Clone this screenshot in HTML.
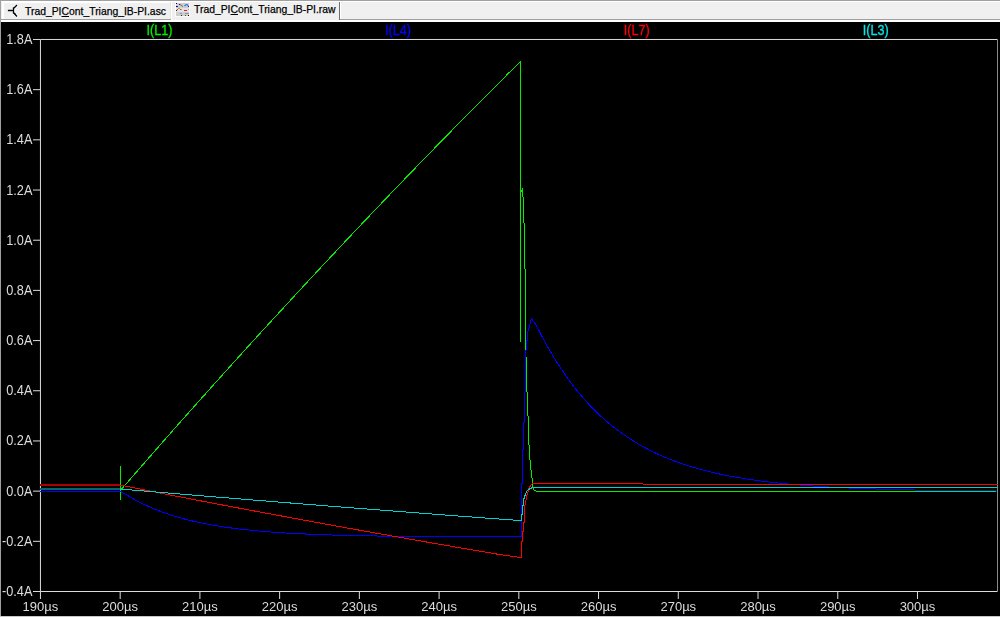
<!DOCTYPE html>
<html><head><meta charset="utf-8"><style>
html,body{margin:0;padding:0;}
body{width:1000px;height:617px;position:relative;overflow:hidden;background:#f0f0f0;font-family:"Liberation Sans",sans-serif;}
.bar{position:absolute;left:0;top:0;width:1000px;height:22px;background:#f0f0f0;}
.tab{position:absolute;font-size:11px;color:#000;white-space:nowrap;transform:scaleX(0.9425);transform-origin:0 0;-webkit-text-stroke:0.25px #000;}
</style></head><body>
<div class="bar">
 <svg width="1000" height="22" style="position:absolute;left:0;top:0">
  <rect x="0" y="0" width="1000" height="22" fill="#f0f0f0"/>
  <rect x="0" y="0" width="1000" height="1" fill="#a0a0a0"/>
  <rect x="0" y="1" width="1000" height="1" fill="#ffffff"/>
  <rect x="0" y="19" width="1000" height="1" fill="#a0a0a0"/>
  <rect x="0" y="20" width="1000" height="2" fill="#ffffff"/>
  <rect x="2" y="2" width="2" height="17" fill="#ffffff"/>
  <rect x="2" y="2" width="168" height="1" fill="#ffffff"/>
  <rect x="170" y="2" width="1" height="17" fill="#e6e6e6"/>
  <rect x="171" y="1" width="168" height="21" fill="#f0f0f0"/>
  <rect x="171" y="1" width="1" height="19" fill="#ffffff"/>
  <rect x="171" y="1" width="168" height="1" fill="#ffffff"/>
  <rect x="339" y="2" width="1" height="18" fill="#6e6e6e"/><rect x="340" y="2" width="1" height="17" fill="#ffffff"/>
  <rect x="171" y="20" width="169" height="2" fill="#ffffff"/>
  <g stroke="#fff" stroke-width="2.6" fill="none" stroke-linecap="round" opacity="0.8">
   <path d="M8.5 10.5H12.5M13.5 8V13M13.5 8.5L16.5 5.5M13.5 12.5L16.5 16"/>
  </g>
  <g stroke="#000" stroke-width="1.3" fill="none" stroke-linecap="square">
   <path d="M8.5 10.5H12.5M13.5 8V13M13.5 8.5L16.5 5.5M13.5 12.5L16.5 16"/>
  </g>
  <path d="M14.2 13.2L16 15.6L15.6 13.6Z" fill="#000"/>
  <g>
   <rect x="175" y="2" width="15" height="15" fill="#fafafa"/>
   <rect x="176" y="3" width="13" height="13" fill="#cdcdcd"/>
   <rect x="176" y="8" width="13" height="4" fill="#d6e6ea"/>
   <rect x="176" y="3" width="1" height="1" fill="#111"/>
   <rect x="176" y="6" width="1" height="1" fill="#111"/>
   <rect x="176" y="10" width="1" height="1" fill="#222"/>
   <rect x="177" y="6" width="1" height="1" fill="#1010ff"/>
   <rect x="179" y="4" width="1" height="1" fill="#1010ff"/>
   <path d="M180 4.5L183 6.5" stroke="#707070" stroke-width="1" fill="none"/>
   <path d="M184.5 6L186 4.5L187.3 4.7L188.5 6.5" stroke="#3a78d8" stroke-width="1.1" fill="none"/>
   <rect x="188" y="6" width="1" height="1" fill="#1010ff"/>
   <rect x="177" y="9" width="1" height="1" fill="#ff2a10"/>
   <rect x="178" y="8" width="2" height="1" fill="#e89030"/>
   <rect x="180" y="9" width="1" height="1" fill="#ff2a10"/>
   <rect x="181" y="9" width="1" height="1" fill="#e89030"/>
   <rect x="184" y="10" width="3" height="1" fill="#ff1010"/>
   <rect x="188" y="9" width="1" height="1" fill="#e89030"/>
   <rect x="180" y="13" width="2" height="1" fill="#8a98b0"/>
   <rect x="185" y="13" width="4" height="1" fill="#8a98b0"/>
   <rect x="181" y="15" width="1" height="1" fill="#222"/>
   <rect x="185" y="15" width="1" height="1" fill="#555"/>
   <rect x="188" y="15" width="1" height="1" fill="#111"/>
  </g>
 </svg>
 <div class="tab" style="left:25px;top:5px">Trad_PI<u>C</u>ont_Triang_IB-PI.asc</div>
 <div class="tab" style="left:194px;top:2.5px">Trad_PI<u>C</u>ont_Triang_IB-PI.raw</div>
</div>
<svg width="1000" height="595" viewBox="0 22 1000 595" style="position:absolute;left:0;top:22px;will-change:transform">
<rect x="0" y="22" width="1000" height="595" fill="#000"/>
<g stroke="#dcdcdc" stroke-width="1" fill="none">
<path d="M40.45 39.47H997.5M40.45 591.5H997.5M40.45 39.47V591.5"/>
<path d="M33 39.47H40.45"/>
<path d="M33 89.66H40.45"/>
<path d="M33 139.84H40.45"/>
<path d="M33 190.03H40.45"/>
<path d="M33 240.21H40.45"/>
<path d="M33 290.39H40.45"/>
<path d="M33 340.58H40.45"/>
<path d="M33 390.76H40.45"/>
<path d="M33 440.95H40.45"/>
<path d="M33 491.13H40.45"/>
<path d="M33 541.32H40.45"/>
<path d="M33 591.51H40.45"/>
<path d="M40.45 591.5V599"/>
<path d="M120.18 591.5V599"/>
<path d="M199.91 591.5V599"/>
<path d="M279.64 591.5V599"/>
<path d="M359.37 591.5V599"/>
<path d="M439.10 591.5V599"/>
<path d="M518.83 591.5V599"/>
<path d="M598.56 591.5V599"/>
<path d="M678.29 591.5V599"/>
<path d="M758.02 591.5V599"/>
<path d="M837.75 591.5V599"/>
<path d="M917.48 591.5V599"/>
</g>
<path d="M997.5 39.47V591.5" stroke="#8a8a8a" stroke-width="1"/>
<g shape-rendering="crispEdges"><rect x="40.45" y="484" width="80.2" height="2" fill="#aa0000"/><rect x="40.45" y="488" width="80.2" height="2" fill="#006868"/></g>
<g fill="none" stroke-width="1" stroke-linejoin="round" shape-rendering="crispEdges">
<polyline stroke="#00f000" points="40.45,491.50 120.50,491.50"/>
<polyline stroke="#00f000" points="120.60,466.30 120.60,500.00"/>
<polyline stroke="#00f000" points="121.00,489.80 127.77,481.98 134.54,474.20 141.30,466.44 148.07,458.69 154.84,450.97 161.61,443.27 168.37,435.58 175.14,427.92 181.91,420.27 188.68,412.65 195.45,405.04 202.21,397.45 208.98,389.88 215.75,382.33 222.52,374.80 229.28,367.29 236.05,359.79 242.82,352.32 249.59,344.86 256.36,337.42 263.12,330.00 269.89,322.60 276.66,315.22 283.43,307.86 290.19,300.52 296.96,293.19 303.73,285.88 310.50,278.59 317.27,271.32 324.03,264.07 330.80,256.83 337.57,249.62 344.34,242.42 351.11,235.24 357.87,228.07 364.64,220.93 371.41,213.80 378.18,206.69 384.94,199.60 391.71,192.53 398.48,185.48 405.25,178.44 412.02,171.42 418.78,164.42 425.55,157.43 432.32,150.46 439.09,143.51 445.85,136.58 452.62,129.67 459.39,122.77 466.16,115.89 472.93,109.02 479.69,102.18 486.46,95.35 493.23,88.54 500.00,81.74 506.76,74.97 513.53,68.21 520.50,61.80 520.50,341.50 520.50,193.00 522.50,188.60 522.50,197.00 523.50,197.00 523.50,223.00 524.50,223.00 524.50,269.00 525.00,269.00 525.00,323.50 525.50,323.50 525.50,357.50 526.50,357.50 526.50,392.00 527.50,392.00 527.50,416.00 528.00,416.00 528.00,430.00 528.50,430.00 528.50,445.00 529.50,445.00 529.50,460.00 530.50,460.00 530.50,470.00 531.50,470.00 531.50,478.00 532.50,478.00 532.50,485.00 534.00,490.00 537.00,491.50 540.00,491.50 997.50,491.50"/>
<polyline stroke="#0000ff" points="40.45,491.50 120.50,491.50 125.56,494.29 130.63,497.35 135.69,500.19 140.76,502.82 145.82,505.27 150.89,507.54 155.95,509.65 161.02,511.61 166.08,513.43 171.15,515.12 176.21,516.69 181.27,518.15 186.34,519.50 191.40,520.76 196.47,521.93 201.53,523.01 206.60,524.01 211.66,524.95 216.73,525.82 221.79,526.62 226.86,527.37 231.92,528.06 236.98,528.71 242.05,529.31 247.11,529.86 252.18,530.38 257.24,530.86 262.31,531.30 267.37,531.72 272.44,532.10 277.50,532.46 282.57,532.79 287.63,533.10 292.69,533.38 297.76,533.65 302.82,533.89 307.89,534.12 312.95,534.33 318.02,534.53 323.08,534.71 328.15,534.88 333.21,535.04 338.28,535.19 343.34,535.32 348.41,535.45 353.47,535.57 358.53,535.67 363.60,535.78 368.66,535.87 373.73,535.96 378.79,536.04 383.86,536.11 388.92,536.18 393.99,536.25 399.05,536.31 404.12,536.36 409.18,536.42 414.24,536.46 419.31,536.51 424.37,536.55 429.44,536.59 434.50,536.62 439.57,536.66 444.63,536.69 449.70,536.72 454.76,536.74 459.83,536.77 464.89,536.79 469.95,536.81 475.02,536.83 480.08,536.85 485.15,536.87 490.21,536.88 495.28,536.90 500.34,536.91 505.41,536.92 510.47,536.94 515.54,536.95 520.50,536.50 521.50,536.50 521.50,483.00 522.50,483.00 522.50,449.00 523.50,449.00 523.50,422.00 524.50,422.00 524.50,392.00 525.00,392.00 525.00,366.00 525.50,366.00 525.50,350.00 526.50,350.00 526.50,340.00 527.50,340.00 527.50,333.00 531.50,318.60 534.00,322.00 537.00,326.62 540.87,334.27 544.74,341.56 548.61,348.52 552.48,355.15 556.35,361.47 560.22,367.50 564.09,373.25 567.96,378.74 571.83,383.97 575.70,388.96 579.57,393.72 583.44,398.25 587.31,402.58 591.18,406.71 595.05,410.64 598.92,414.39 602.79,417.97 606.66,421.38 610.53,424.64 614.39,427.74 618.26,430.70 622.13,433.53 626.00,436.22 629.87,438.78 633.74,441.23 637.61,443.57 641.48,445.79 645.35,447.92 649.22,449.94 653.09,451.87 656.96,453.71 660.83,455.47 664.70,457.14 668.57,458.74 672.44,460.26 676.31,461.72 680.18,463.10 684.05,464.42 687.92,465.68 691.79,466.88 695.66,468.03 699.53,469.12 703.40,470.16 707.27,471.16 711.14,472.10 715.01,473.01 718.88,473.87 722.75,474.69 726.62,475.48 730.49,476.22 734.36,476.94 738.23,477.62 742.10,478.26 745.97,478.88 749.84,479.47 753.71,480.03 757.58,480.57 761.45,481.08 765.32,481.57 769.18,482.03 773.05,482.48 776.92,482.90 780.79,483.30 784.66,483.69 788.53,484.05 792.40,484.40 796.27,484.74 800.14,485.06 804.01,485.36 807.88,485.65 811.75,485.92 815.62,486.19 819.49,486.44 823.36,486.68 827.23,486.91 831.10,487.12 834.97,487.33 838.84,487.53 842.71,487.72 846.58,487.90 850.45,488.07 854.32,488.23 858.19,488.39 862.06,488.54 865.93,488.68 869.80,488.81 873.67,488.94 877.54,489.07 881.41,489.18 885.28,489.30 889.15,489.40 893.02,489.50 896.89,489.60 900.76,489.69 904.63,489.78 908.50,489.87 912.37,489.95 916.24,490.02 920.11,490.10 923.97,490.17 927.84,490.23 931.71,490.30 935.58,490.36 939.45,490.41 943.32,490.47 947.19,490.52 951.06,490.57 954.93,490.62 958.80,490.66 962.67,490.71 966.54,490.75 970.41,490.79 974.28,490.83 978.15,490.86 982.02,490.90 985.89,490.93 989.76,490.96 993.63,490.99 997.50,491.02"/>
<polyline stroke="#ff0000" points="120.50,485.00 141.56,489.43 162.62,493.53 183.67,497.59 204.73,501.62 225.79,505.62 246.85,509.58 267.91,513.50 288.96,517.39 310.02,521.25 331.08,525.08 352.14,528.87 373.19,532.63 394.25,536.36 415.31,540.06 436.37,543.72 457.43,547.35 478.48,550.95 499.54,554.52 520.50,557.50 521.50,557.50 521.50,541.00 522.50,541.00 522.50,531.00 523.50,531.00 523.50,522.00 524.50,522.00 524.50,505.00 525.00,505.00 527.00,495.00 529.50,487.00 532.00,484.00 537.00,483.60 643.00,483.60 643.00,484.50 997.50,484.50"/>
<polyline stroke="#00d2d2" points="120.50,489.00 141.55,490.78 162.61,492.55 183.66,494.31 204.71,496.05 225.76,497.78 246.82,499.49 267.87,501.20 288.92,502.88 309.97,504.56 331.03,506.22 352.08,507.87 373.13,509.51 394.18,511.13 415.24,512.74 436.29,514.34 457.34,515.93 478.39,517.50 499.45,519.06 520.50,520.50 521.50,520.50 521.50,514.00 522.50,514.00 522.50,505.00 523.50,505.00 523.50,500.00 525.50,494.00 527.00,491.00 530.00,488.50 533.00,487.50 997.50,487.50"/>
</g>
<g font-family="Liberation Sans, sans-serif" font-size="14" fill="#dcdcdc" text-anchor="end">
<text transform="translate(32.4 44.00) scale(0.91 1)">1.8A</text>
<text transform="translate(32.4 94.00) scale(0.91 1)">1.6A</text>
<text transform="translate(32.4 144.00) scale(0.91 1)">1.4A</text>
<text transform="translate(32.4 195.00) scale(0.91 1)">1.2A</text>
<text transform="translate(32.4 245.00) scale(0.91 1)">1.0A</text>
<text transform="translate(32.4 295.00) scale(0.91 1)">0.8A</text>
<text transform="translate(32.4 345.00) scale(0.91 1)">0.6A</text>
<text transform="translate(32.4 395.00) scale(0.91 1)">0.4A</text>
<text transform="translate(32.4 445.00) scale(0.91 1)">0.2A</text>
<text transform="translate(32.4 496.00) scale(0.91 1)">0.0A</text>
<text transform="translate(32.4 546.00) scale(0.91 1)">-0.2A</text>
<text transform="translate(32.4 596.00) scale(0.91 1)">-0.4A</text>
</g>
<g font-family="Liberation Sans, sans-serif" font-size="13" fill="#dcdcdc" text-anchor="middle">
<text x="40.45" y="611">190µs</text>
<text x="120.18" y="611">200µs</text>
<text x="199.91" y="611">210µs</text>
<text x="279.64" y="611">220µs</text>
<text x="359.37" y="611">230µs</text>
<text x="439.10" y="611">240µs</text>
<text x="518.83" y="611">250µs</text>
<text x="598.56" y="611">260µs</text>
<text x="678.29" y="611">270µs</text>
<text x="758.02" y="611">280µs</text>
<text x="837.75" y="611">290µs</text>
<text x="917.48" y="611">300µs</text>
</g>
<g font-family="Liberation Sans, sans-serif" font-size="14" text-anchor="middle">
<text transform="translate(159.4 35) scale(0.9 1)" fill="#00f000" stroke="#00f000" stroke-width="0.3">I(L1)</text>
<text transform="translate(398 35) scale(0.9 1)" fill="#0000ff" stroke="#0000ff" stroke-width="0.3">I(L4)</text>
<text transform="translate(636.8 35) scale(0.9 1)" fill="#ff0000" stroke="#ff0000" stroke-width="0.3">I(L7)</text>
<text transform="translate(875.7 35) scale(0.9 1)" fill="#00e8e8" stroke="#00e8e8" stroke-width="0.3">I(L3)</text>
</g>
</svg>
<div style="position:absolute;left:0;top:0;width:1px;height:617px;background:#a0a0a0"></div>
<div style="position:absolute;left:0;top:616px;width:1000px;height:1px;background:#c8c8c8"></div>
</body></html>
